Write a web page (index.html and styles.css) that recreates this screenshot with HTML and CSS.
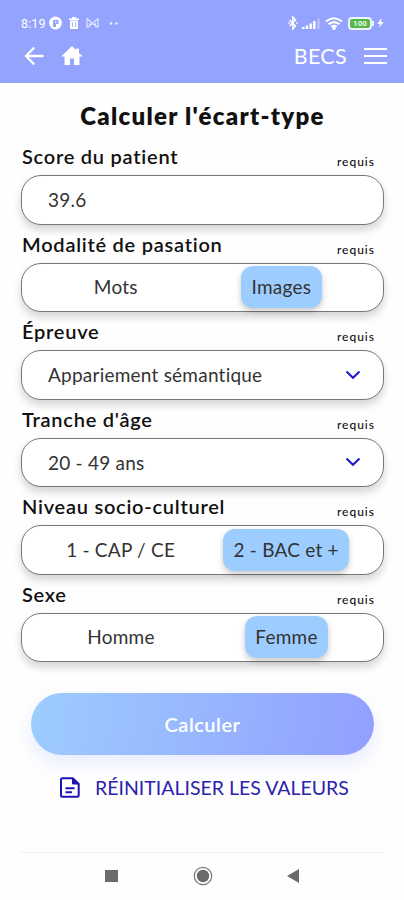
FILE: index.html
```html
<!DOCTYPE html>
<html lang="fr">

<head>
    <meta charset="UTF-8" />
    <meta name="viewport" content="width=device-width, initial-scale=1" />
    <title>BECS - Calculer l'écart-type</title>
    <link rel="stylesheet" href="styles.css">
</head>

<body>
    <header>
        <div class="status">
            <span class="time">8:19</span>
            <svg width="13" height="14" viewBox="0 0 13 14">
                <circle cx="6.5" cy="7" r="6.4" fill="#fff" />
                <path d="M4 11V4h5.500v4H7v3z" fill="#94a3fe" />
                <path d="M6 5.500h1.500v1.200H6z" fill="#fff" />
            </svg>
            <svg class="s-trash" width="10" height="12" viewBox="0 0 10 12" fill="#fff">
                <path d="M0 1.500h3V0h4v1.500h3V3H0zM1 3.500h8V12H1z" />
                <path d="M3.500 5v5M6.500 5v5" stroke="#94a3fe" stroke-width=".8" />
            </svg>
            <svg class="s-mail" width="13" height="10" viewBox="0 0 13 10" fill="none" stroke="#e3e7ff" stroke-width="1.200">
                <path d="M1 9.500V.5l5.500 5 5.500-5v9M3.500 9.500V5M9.500 9.500V5M1 9.500l5.500-4 5.500 4" />
            </svg>
            <svg class="s-dots" width="10" height="3" viewBox="0 0 10 3" fill="#eef0ff">
                <circle cx="2" cy="1.500" r="1.300" />
                <circle cx="7.500" cy="1.500" r="1.300" />
            </svg>
            <svg class="s-bt" width="10" height="14" viewBox="0 0 10 14" fill="none" stroke="#fff" stroke-width="1.500">
                <path d="M1.500 4l6 6L4.700 13V1l2.800 3-6 6M.2 7h1.500M8 7h1.500" />
            </svg>
            <svg class="s-signal" width="18" height="11" viewBox="0 0 18 11" fill="#fff">
                <path d="M0 9h2.500v2H0zM3.700 7.500h2.500V11H3.700zM7.400 5.500h2.500V11H7.400zM11 3h2.500v8H11z" />
                <path d="M15.500 .5h2V11h-2z" opacity=".4" />
            </svg>
            <svg class="s-wifi" width="18" height="13" viewBox="0 0 18 13" fill="none" stroke="#fff" stroke-width="2.100">
                <path d="M1 4.500q8-6.500 16 0M3.500 7.300q5.500-4.500 11 0M6.300 9.800q2.700-2 5.400 0" />
                <circle cx="9" cy="11.300" r=".7" />
            </svg>
            <span class="battery">100</span><i class="nub"></i>
            <svg class="s-bolt" width="7" height="10" viewBox="0 0 7 10" fill="#fff">
                <path d="M4.500 0L.3 5.800H3L2 10l4.700-6H4z" />
            </svg>
        </div>
        <nav>
            <svg width="20" height="20" viewBox="0 0 20 20" fill="none" stroke="#fff" stroke-width="2.300">
                <path d="M10.300 1.500L2 10l8.300 8.500M2 10h17.500" />
            </svg>
            <svg class="home" width="22" height="20" viewBox="0 0 22 20" fill="#fff">
                <path d="M11 0L.3 10.500h3.200V19H9v-6.500h4V19h5.500v-8.500h3.200L18 6.900V2.500h-3v1.500z" />
            </svg>
            <span class="brand">BECS</span>
            <div class="burger"><i></i><i></i><i></i></div>
        </nav>
    </header>

    <main>
        <h1>Calculer l'écart-type</h1>

        <div class="field">
            <div class="label"><span>Score du patient</span><small>requis</small></div>
            <div class="box"><span>39.6</span></div>
        </div>
        <div class="field">
            <div class="label"><span>Modalité de pasation</span><small>requis</small></div>
            <div class="box choice">
                <span>Mots</span>
                <span class="selected">Images</span>
            </div>
        </div>
        <div class="field">
            <div class="label"><span>Épreuve</span><small>requis</small></div>
            <div class="box">
                <span>Appariement sémantique</span>
                <svg class="chevron" width="16" height="10" viewBox="0 0 16 10"><path d="M1.500 1.500L8 7.800l6.500-6.300" /></svg>
            </div>
        </div>
        <div class="field">
            <div class="label"><span>Tranche d'âge</span><small>requis</small></div>
            <div class="box">
                <span>20 - 49 ans</span>
                <svg class="chevron" width="16" height="10" viewBox="0 0 16 10"><path d="M1.500 1.500L8 7.800l6.500-6.300" /></svg>
            </div>
        </div>
        <div class="field">
            <div class="label"><span>Niveau socio-culturel</span><small>requis</small></div>
            <div class="box choice">
                <span>1 - CAP / CE</span>
                <span class="selected">2 - BAC et +</span>
            </div>
        </div>
        <div class="field">
            <div class="label"><span>Sexe</span><small>requis</small></div>
            <div class="box choice">
                <span>Homme</span>
                <span class="selected">Femme</span>
            </div>
        </div>

        <button class="submit">Calculer</button>
        <a class="reset">
            <svg width="20" height="21" viewBox="0 0 20 21" fill="none" stroke="#1d12b8" stroke-width="2">
                <path d="M2.500 1.300h10.300L18.700 7v11.200a1.500 1.500 0 0 1-1.500 1.500H2.500A1.500 1.500 0 0 1 1 18.200V2.800a1.500 1.500 0 0 1 1.500-1.500z" />
                <path d="M12.500 1.500V7h6z" fill="#1d12b8" stroke-width="1" />
                <path d="M5.500 11.300h9M5.500 15.300h6.500" />
            </svg>
            <span>RÉINITIALISER LES VALEURS</span>
        </a>
    </main>

    <footer>
        <svg width="13" height="12" viewBox="0 0 13 12"><rect width="13" height="12" fill="#6b6b6b" /></svg>
        <svg width="20" height="20" viewBox="0 0 20 20">
            <circle cx="10" cy="10" r="8.700" fill="none" stroke="#777" stroke-width="1.200" />
            <circle cx="10" cy="10" r="6.200" fill="#6b6b6b" />
        </svg>
        <svg width="12" height="14" viewBox="0 0 12 14"><path d="M12 0v14L0 7z" fill="#6b6b6b" /></svg>
    </footer>
</body>

</html>
```
FILE: styles.css
```css
* {
    box-sizing: border-box;
}

body {
    font-family: Lato, "Open Sans", sans-serif;
    font-variant-ligatures: none;
    background: #fefefe;
    color: #111;
    margin: 0;
    height: 900px;
    display: flex;
    flex-direction: column;
    overflow: hidden;
}

svg {
    flex-shrink: 0;
}

header {
    height: 83px;
    background: #94a3fe;
    color: #fff;
}

.status {
    height: 46px;
    padding: 0 20px 0 21px;
    display: flex;
    align-items: center;
}

.time {
    font-family: Roboto, sans-serif;
    font-size: 12.5px;
    width: 28px;
    letter-spacing: 0.1px;
}

.s-trash { margin-left: 7px; }
.s-mail { margin-left: 7px; }
.s-dots { margin-left: 10px; }
.s-bt { margin-left: auto; }
.s-signal { margin-left: 4px; }
.s-wifi { margin-left: 5px; }

.battery {
    width: 24px;
    height: 13px;
    margin-left: 5px;
    border: 2px solid #eef1ff;
    border-radius: 4px;
    background: #55b948;
    color: #e5f7e1;
    font: bold 8px/9px Roboto, sans-serif;
    text-align: center;
}

.nub {
    width: 2px;
    height: 5px;
    background: #eef1ff;
}

.s-bolt { margin-left: 3px; }

nav {
    height: 20px;
    padding: 0 17px 0 24px;
    display: flex;
    align-items: center;
}

.home { margin-left: 17px; }

.brand {
    margin-left: auto;
    font-size: 21.5px;
    line-height: 20px;
    letter-spacing: 0.3px;
}

.burger {
    width: 23px;
    height: 16px;
    margin-left: 17px;
    display: flex;
    flex-direction: column;
    justify-content: space-between;
}

.burger i {
    height: 2px;
    background: #fff;
}

main {
    padding: 0 20px 0 21px;
    height: 769px;
}

h1 {
    margin: 0;
    height: 54px;
    padding-top: 18px;
    font-size: 24px;
    line-height: 30px;
    font-weight: 800;
    letter-spacing: 1.3px;
    text-align: center;
    white-space: nowrap;
}

.field {
    height: 87.5px;
}

.label {
    height: 38px;
    padding: 7px 9px 0 1px;
    display: flex;
    justify-content: space-between;
    font-size: 20px;
    line-height: 24px;
    font-weight: 600;
    letter-spacing: 0.75px;
}

small {
    padding-top: 6px;
    font-size: 12px;
    font-weight: 500;
    letter-spacing: 1px;
}

.box {
    height: 49.5px;
    padding: 0 22px 0 26px;
    display: flex;
    align-items: center;
    justify-content: space-between;
    background: #fff;
    border: 1px solid #777;
    border-radius: 20px;
    box-shadow: 0 5px 8px rgb(0 0 0 / 0.17);
    font-size: 19px;
    letter-spacing: 0.23px;
    color: #333;
}

.chevron {
    fill: none;
    stroke: #1d16cc;
    stroke-width: 2;
}

.choice {
    padding: 0 15px;
    justify-content: space-around;
}

.choice span {
    height: 42px;
    padding: 0 10.5px;
    line-height: 42px;
}

.choice .selected {
    background: #9dccff;
    border-radius: 12px;
    box-shadow: 0 3px 6px rgb(0 0 0 / 0.22);
}

.submit {
    width: 343px;
    height: 62px;
    margin: 31px 0 0 10px;
    border: none;
    border-radius: 31px;
    background: linear-gradient(100deg, #9dcdff, #929ffe);
    box-shadow: 0 8px 18px rgb(146 160 255 / 0.2);
    color: #fff;
    font: 600 20px Lato, sans-serif;
    letter-spacing: 0.5px;
    display: block;
}

.reset {
    margin: 21px 0 0 39px;
    display: flex;
    align-items: center;
    gap: 15px;
    color: #2c22ad;
    font-size: 19.5px;
    line-height: 23px;
    white-space: nowrap;
}

footer {
    height: 47px;
    margin: 0 20px;
    border-top: 1px solid #f3f3f3;
    padding: 0 85px 0 85px;
    display: flex;
    align-items: center;
    justify-content: space-between;
}
```
